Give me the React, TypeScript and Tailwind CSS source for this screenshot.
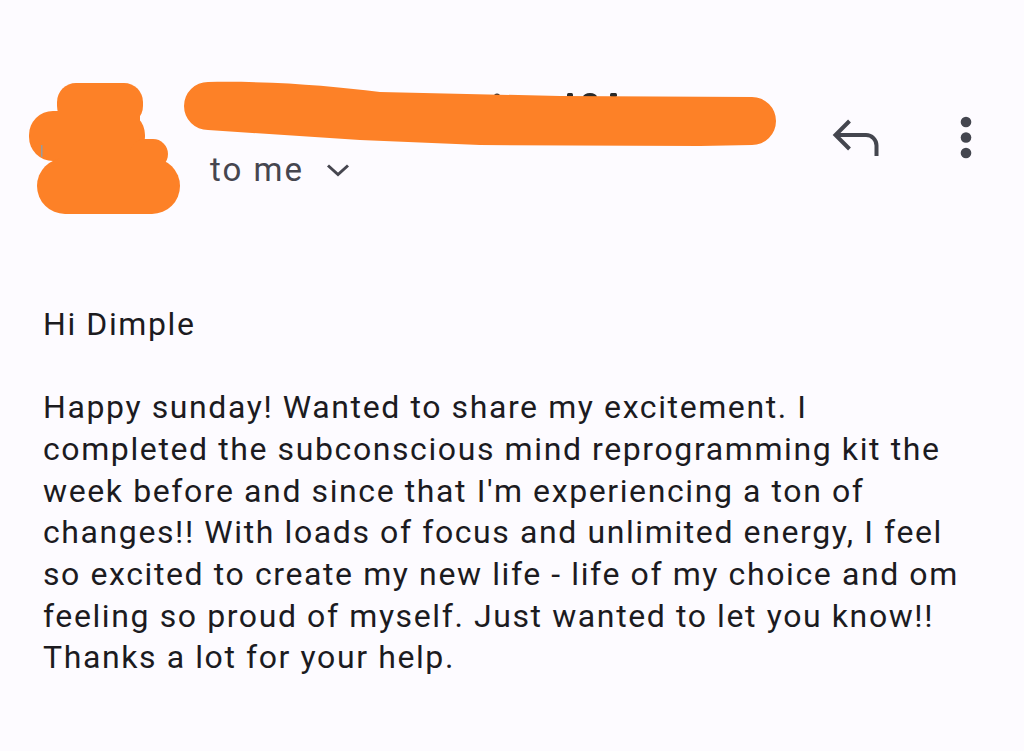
const BODY_LINES = [
  'Happy sunday! Wanted to share my excitement. I',
  'completed the subconscious mind reprogramming kit the',
  "week before and since that I'm experiencing a ton of",
  'changes!! With loads of focus and unlimited energy, I feel',
  'so excited to create my new life - life of my choice and om',
  'feeling so proud of myself. Just wanted to let you know!!',
  'Thanks a lot for your help.',
];

const ORANGE = '#fd8127';

// scribbled-over sender avatar
function AvatarBlob() {
  return (
    <svg className="ml-[24px] h-[142px] w-[160px] shrink-0" viewBox="24 78 160 142" aria-hidden>
      <g fill={ORANGE}>
        <rect x="57" y="83" width="86" height="42" rx="19" />
        <rect x="29" y="111" width="116" height="50" rx="24" />
        <rect x="60" y="110" width="80" height="70" />
        <rect x="130" y="139" width="38" height="30" rx="15" />
        <rect x="37" y="158" width="143" height="56" rx="28" />
        <rect x="60" y="150" width="100" height="20" />
      </g>
      <rect x="41" y="145" width="1.5" height="12" fill="#9a9a9a" />
    </svg>
  );
}

// scribbled-over sender name
function NameBar() {
  return (
    <svg className="h-[70px] w-[600px]" viewBox="184 78 600 70" aria-hidden>
      <g fill="#2a2a2a">
        <ellipse cx="367" cy="95" rx="3" ry="2.5" />
        <ellipse cx="497" cy="96" rx="3" ry="2.5" />
        <rect x="567" y="93" width="6" height="4" rx="1.5" />
        <ellipse cx="590" cy="97" rx="7" ry="4" />
        <rect x="610" y="93" width="7" height="4" rx="1.5" />
      </g>
      <path
        d="M 208 82 C 280 81 330 86 380 92 L 560 96 L 752 97 A 24 24 0 0 1 752 145 L 700 146 L 480 145 L 360 140 L 208 130 A 24 24 0 0 1 208 82 Z"
        fill={ORANGE}
      />
    </svg>
  );
}

function ReplyIcon() {
  return (
    <svg className="ml-[46px] mt-[38px] h-[44px] w-[52px] shrink-0" viewBox="830 116 52 44" aria-hidden>
      <path
        d="M 849.5 121 L 835.5 135 L 849.5 149 M 836 135 H 866 A 10.5 10.5 0 0 1 876.5 145.5 V 156"
        fill="none"
        stroke="#44464f"
        strokeWidth="4"
      />
    </svg>
  );
}

function KebabIcon() {
  return (
    <svg className="ml-[74px] mt-[36px] h-[48px] w-[20px] shrink-0" viewBox="956 114 20 48" aria-hidden>
      <g fill="#44464f">
        <circle cx="966" cy="122" r="5.3" />
        <circle cx="966" cy="137.5" r="5.3" />
        <circle cx="966" cy="153" r="5.3" />
      </g>
    </svg>
  );
}

export default function App() {
  return (
    <div className="h-[751px] w-[1024px] overflow-hidden bg-[#fdfbff] font-['Roboto',sans-serif]">
      <header className="flex items-start pt-[78px]">
        <AvatarBlob />
        <div className="flex flex-col">
          <NameBar />
          <div className="ml-[26px] mt-[2px] flex h-[40px] items-center text-[33px] leading-[40px] tracking-[2px] text-[#46464f]">
            <span>to me</span>
            <svg className="ml-[22px] h-[14px] w-[24px]" viewBox="0 0 24 14" aria-hidden>
              <path d="M 2 2.5 L 12 11.5 L 22 2.5" fill="none" stroke="#46464f" strokeWidth="3" />
            </svg>
          </div>
        </div>
        <ReplyIcon />
        <KebabIcon />
      </header>

      <main className="whitespace-nowrap px-[43px] pt-[84px] text-[32px] leading-[41.67px] tracking-[1.6px] text-[#1c1b1f]">
        <p>Hi Dimple</p>
        <p className="mt-[41.67px]">
          {BODY_LINES.map((line, i) => (
            <span key={i} className="block">
              {line}
            </span>
          ))}
        </p>
      </main>
    </div>
  );
}
